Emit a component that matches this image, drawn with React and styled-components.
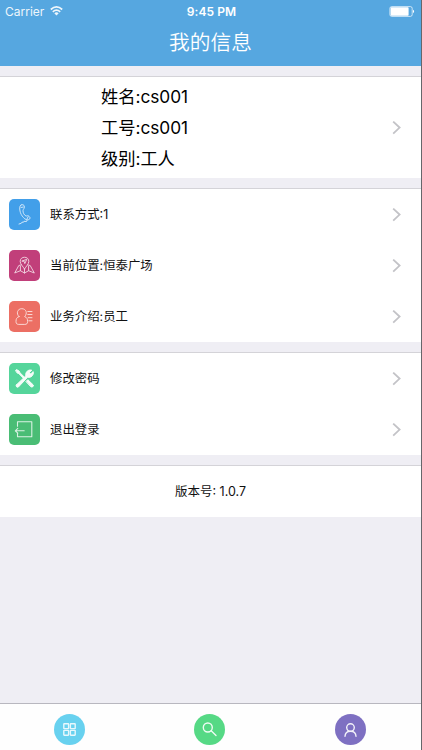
import React from 'react';
import styled, { createGlobalStyle } from 'styled-components';

const GlobalStyle = createGlobalStyle`
    * {
        box-sizing: border-box;
    }
    body {
        margin: 0;
        background: #efeef4;
        font-family: Inter, "Noto Sans CJK SC", sans-serif;
    }
`;
const Container = styled.div`
    width: 422px;
    height: 750px;
    display: flex;
    flex-direction: column;
    background: #efeef4;
    border-right: 1px solid #66666b;
    overflow: hidden;
`;
const Header = styled.header`
    height: 66px;
    flex-shrink: 0;
    background: #56a7e0;
    color: white;
`;
const StatusBar = styled.div`
    height: 22px;
    padding: 0 6px 0 5px;
    display: grid;
    grid-template-columns: 1fr auto 1fr;
    align-items: center;
    font-size: 12px;
`;
const Carrier = styled.div`
    display: flex;
    align-items: center;
    gap: 6px;
    opacity: 0.9;
`;
const Time = styled.div`
    padding-left: 3px;
    font-weight: 600;
    font-size: 12px;
    letter-spacing: 0.1px;
`;
const Battery = styled.svg`
    justify-self: end;
`;
const Title = styled.h1`
    margin: 0;
    height: 40px;
    line-height: 41px;
    text-align: center;
    font-size: 20.7px;
    font-weight: 350;
`;
const Section = styled.section`
    flex-shrink: 0;
    margin-top: 10px;
    border-top: 1px solid #d4d3d8;
    background: white;
`;
const Profile = styled.div`
    height: 101px;
    padding: 0 20px 0 101px;
    display: flex;
    align-items: center;
    justify-content: space-between;
`;
const ProfileLine = styled.p`
    margin: 0;
    height: 31px;
    line-height: 31px;
    font-size: 17.3px;
    font-weight: 390;
    letter-spacing: -0.05px;
    color: #000;
`;
const Row = styled.div`
    height: 51px;
    padding: 0 20px 0 9px;
    display: flex;
    align-items: center;
`;
const IconBox = styled.div`
    width: 31px;
    height: 31px;
    border-radius: 5px;
    display: flex;
    align-items: center;
    justify-content: center;
    background: ${props => props.color};
`;
const Label = styled.span`
    flex: 1;
    margin-left: 10px;
    padding-bottom: 1px;
    font-size: 12.4px;
    font-weight: 390;
    color: #111;
`;
const Version = styled.div`
    height: 51px;
    line-height: 51px;
    text-align: center;
    font-size: 12.5px;
    font-weight: 390;
    color: #111;
`;
const TabBar = styled.nav`
    height: 47px;
    margin-top: auto;
    flex-shrink: 0;
    display: grid;
    grid-template-columns: repeat(3, 1fr);
    justify-items: center;
    padding-top: 10px;
    background: #fefefe;
    border-top: 1px solid #b8b7bf;
`;
const Tab = styled.div`
    width: 31px;
    height: 31px;
    margin-left: ${props => props.$shift || 0}px;
    border-radius: 50%;
    display: flex;
    align-items: center;
    justify-content: center;
    background: ${props => props.color};
`;
const LineIcon = styled.svg`
    fill: none;
    stroke: white;
    stroke-width: ${props => props.$weight || 0.9};
    stroke-linecap: round;
    stroke-linejoin: round;
    opacity: ${props => props.$opacity || 0.8};
`;

const Chevron = () => (
    <svg width="9" height="14" viewBox="0 0 9 14" fill="none" stroke="#c3c3c7" strokeWidth="1.8">
        <path d="M1.2 0.6 L7.6 6.6 L1.2 12.6"/>
    </svg>
);

const WifiIcon = () => (
    <svg width="13" height="10" viewBox="0 0 13 10" fill="none" stroke="white" strokeWidth="1.7">
        <path d="M0.8 3.5 Q6.5 -1.6 12.2 3.5"/>
        <path d="M2.8 5.8 Q6.5 2.5 10.2 5.8"/>
        <path d="M4.3 7.2 Q6.5 5.4 8.7 7.2 L6.5 9.5 Z" fill="white" stroke="none"/>
    </svg>
);

const PhoneIcon = () => (
    <LineIcon width="31" height="31" viewBox="0 0 31 31">
        <path d="M12 6 C13.3 5 15.3 6 15.5 7.5 C15.8 9.3 14.1 10 14 11.5 C13.8 13.6 15.2 16.3 17 17 C18.3 17.3 18.5 16 20 17.3 C21.5 18.5 21.4 19.8 19.8 20.6 C16.4 22.1 11.8 16.5 11 12 C10.5 9 10.3 7.4 12 6 Z"/>
        <path d="M12 8.5 L14.5 8 M18 20 L19 18 M18.2 21.2 Q17.8 23.5 16 22.4 Q14.7 21.7 14.4 23.3 Q12.7 22.4 12.3 24.3 L10 25"/>
    </LineIcon>
);

const MapIcon = () => (
    <LineIcon width="31" height="31" viewBox="0 0 31 31">
        <path d="M15.5 19 C13.8 16.2 11.2 14.2 11.2 11.3 C11.2 5.9 19.8 5.9 19.8 11.3 C19.8 14.2 17.2 16.2 15.5 19 Z"/>
        <path d="M13.2 11 L17.8 9.3 L15.8 13.6 L15.2 11.6 Z"/>
        <path d="M12 15 L9.8 15.5 L5.7 23 L11.4 20.7 L15.5 23 L19.6 20.7 L25.3 23 L21.2 15.5 L19 15 M11.4 16.4 V20.7 M15.5 19 V23 M19.6 16.4 V20.7"/>
    </LineIcon>
);

const StaffIcon = () => (
    <LineIcon width="31" height="31" viewBox="0 0 31 31">
        <path d="M10 15.6 C6.8 12.5 8.4 7.7 12.8 7.7 C17.2 7.7 18.8 12.5 15.6 15.6 C17.9 16.3 18.6 18 18.6 20.5 C18.6 22.7 17.6 23.4 15.8 23.4 H9.8 C8 23.4 7 22.7 7 20.5 C7 18 7.7 16.3 10 15.6 Z"/>
        <path d="M18.8 10.5 H23 M18.8 13.5 H23 M19.2 16.7 H23 M19.8 19.8 H23"/>
    </LineIcon>
);

const ToolsIcon = () => (
    <LineIcon width="31" height="31" viewBox="0 0 31 31" $opacity={0.95} $weight={1}>
        <path d="M6.8 7.2 L7.6 6.6 L10.3 8.2 L10.9 9.7 L16.3 15 L15.2 16 L9.8 10.6 L8.3 10 Z" fill="white"/>
        <path d="M17.2 18.3 L18.8 16.7 L24.3 22 C24.7 23.4 23.6 24.4 22.3 24 Z" fill="white"/>
        <path d="M7.3 22 L16.8 12.9 C16.1 9 19.2 6.2 22.8 7.2 L20.4 9.5 L21.8 10.9 L24.2 8.6 C25 12.5 21.9 14.9 18.5 14.3 L9.4 24 C7.7 24.6 6.8 23.6 7.3 22 Z" fill="white"/>
    </LineIcon>
);

const ExitIcon = () => (
    <LineIcon width="31" height="31" viewBox="0 0 31 31" $weight={1.1}>
        <path d="M8.5 12.2 V7.7 H22.8 V22.7 H8.5 V19.3"/>
        <path d="M15.2 16.8 H6.5 M8.8 14.4 L6.3 16.8 L8.8 19.2"/>
    </LineIcon>
);

const contacts = [
    { color: '#429fe9', icon: <PhoneIcon/>, text: '联系方式:1' },
    { color: '#c13f7a', icon: <MapIcon/>, text: '当前位置:恒泰广场' },
    { color: '#ec6f64', icon: <StaffIcon/>, text: '业务介绍:员工' },
];

const actions = [
    { color: '#55d59b', icon: <ToolsIcon/>, text: '修改密码' },
    { color: '#4abd75', icon: <ExitIcon/>, text: '退出登录' },
];

const Rows = ({ items }) => items.map(item => (
    <Row key={item.text}>
        <IconBox color={item.color}>{item.icon}</IconBox>
        <Label>{item.text}</Label>
        <Chevron/>
    </Row>
));

const App = () => {
  return (
    <Container>
        <GlobalStyle/>
        <Header>
            <StatusBar>
                <Carrier>Carrier <WifiIcon/></Carrier>
                <Time>9:45 PM</Time>
                <Battery width="26" height="11" viewBox="0 0 26 11">
                    <rect x="0.9" y="0.6" width="22.3" height="9.8" rx="1.8" fill="none" stroke="white" strokeWidth="0.7"/>
                    <rect x="1.6" y="1.2" width="18" height="8.6" rx="0.8" fill="white"/>
                    <path d="M24 3.8 Q26.3 5.5 24 7.2 Z" fill="white"/>
                </Battery>
            </StatusBar>
            <Title>我的信息</Title>
        </Header>
        <Section>
            <Profile>
                <div>
                    <ProfileLine>姓名:cs001</ProfileLine>
                    <ProfileLine>工号:cs001</ProfileLine>
                    <ProfileLine>级别:工人</ProfileLine>
                </div>
                <Chevron/>
            </Profile>
        </Section>
        <Section>
            <Rows items={contacts}/>
        </Section>
        <Section>
            <Rows items={actions}/>
        </Section>
        <Section>
            <Version>版本号: 1.0.7</Version>
        </Section>
        <TabBar>
            <Tab color="#68d1ef" $shift={-2}>
                <LineIcon width="13" height="13" viewBox="0 0 13 13" $weight={1.4} $opacity={0.85}>
                    <rect x="0.8" y="0.8" width="4.8" height="4.8" rx="0.4"/>
                    <rect x="7.4" y="0.8" width="4.8" height="4.8" rx="0.4"/>
                    <rect x="0.8" y="7.4" width="4.8" height="4.8" rx="0.4"/>
                    <rect x="7.4" y="7.4" width="4.8" height="4.8" rx="0.4"/>
                </LineIcon>
            </Tab>
            <Tab color="#56d985" $shift={-1}>
                <LineIcon width="15" height="15" viewBox="0 0 15 15" $weight={1.4} $opacity={0.9}>
                    <circle cx="5.8" cy="5.5" r="4.5"/>
                    <path d="M9.2 8.8 L14 13.5"/>
                </LineIcon>
            </Tab>
            <Tab color="#7e70c2">
                <LineIcon width="13" height="14" viewBox="0 0 13 14" $weight={1.4} $opacity={0.9}>
                    <circle cx="6.5" cy="4.6" r="3.8"/>
                    <path d="M1 13.2 C1.2 10 3.3 8.2 6.5 8.2 C9.7 8.2 11.8 10 12 13.2"/>
                </LineIcon>
            </Tab>
        </TabBar>
    </Container>
  )
}

export default App
